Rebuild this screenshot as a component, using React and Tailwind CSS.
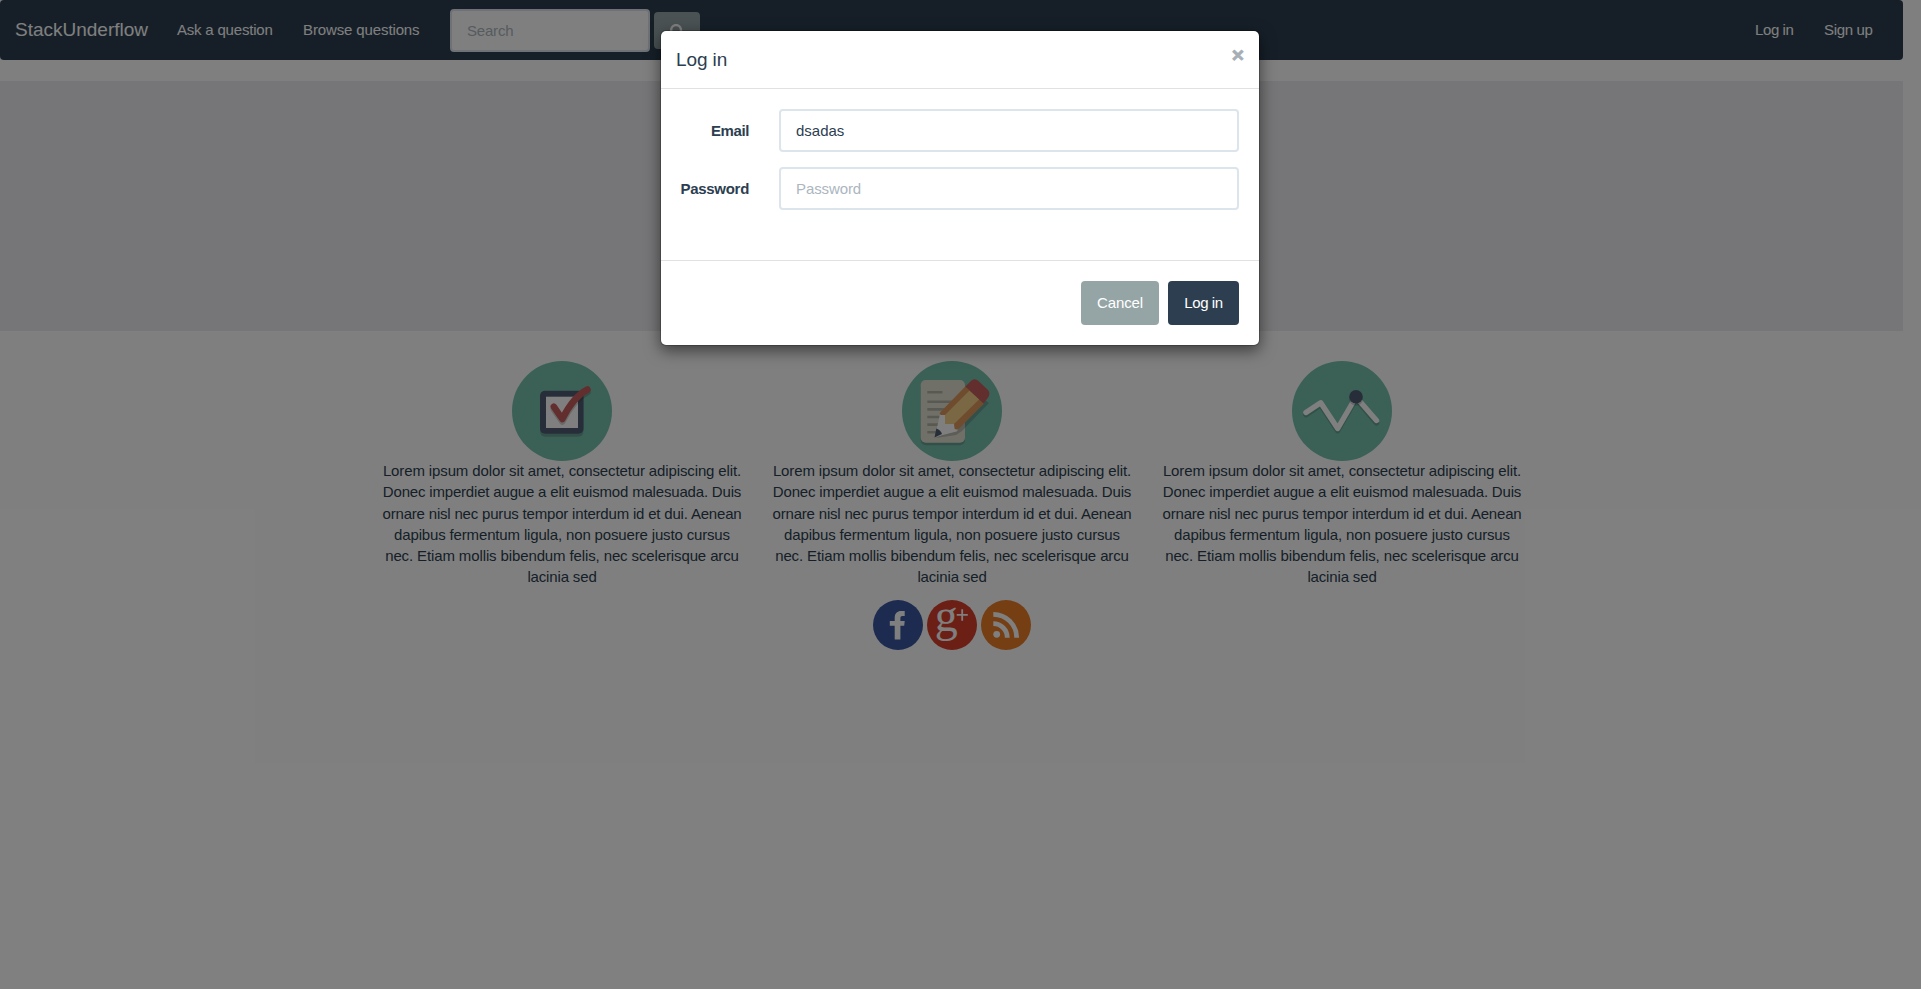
import React from "react";
import { FaSearch } from "react-icons/fa";

const LOREM = [
  ["Lorem ipsum dolor sit amet, consectetur adipiscing elit.", "tracking-[-0.125px]"],
  ["Donec imperdiet augue a elit euismod malesuada. Duis", "tracking-[-0.18px]"],
  ["ornare nisl nec purus tempor interdum id et dui. Aenean", "tracking-[-0.19px]"],
  ["dapibus fermentum ligula, non posuere justo cursus", "tracking-[-0.155px]"],
  ["nec. Etiam mollis bibendum felis, nec scelerisque arcu", "tracking-[-0.12px]"],
  ["lacinia sed", "tracking-[-0.15px]"],
];

function CheckIcon() {
  return (
    <svg viewBox="0 0 100 100" className="size-[100px]">
      <circle cx="50" cy="50" r="50" fill="#76c2af" />
      <rect x="28" y="32.7" width="43.5" height="43" rx="5" fill="#231f20" opacity=".2" />
      <rect x="28" y="29.7" width="43.5" height="43" rx="5" fill="#4f5d73" />
      <rect x="34" y="35.7" width="32" height="31.3" fill="#fff" />
      <g fill="none" strokeWidth="6.5" strokeLinecap="round" strokeLinejoin="round">
        <path d="M41.8 48.2 L50.3 60.5 C57 47 64 37 75.5 31" stroke="#231f20" opacity=".2" />
        <path d="M41.8 45.7 L50.3 58 C57 44.5 64 34.5 75.5 28.5" stroke="#c75c5c" />
      </g>
    </svg>
  );
}

function PencilIcon() {
  return (
    <svg viewBox="0 0 100 100" className="size-[100px]">
      <circle cx="50" cy="50" r="50" fill="#76c2af" />
      <rect x="18.7" y="21.5" width="44.3" height="62.7" rx="5" fill="#231f20" opacity=".2" />
      <rect x="18.7" y="19" width="44.3" height="62.7" rx="5" fill="#e0e0d1" />
      <path
        d="M25.3 31.3H40.5M25.3 40.7H50M25.3 48.4H46M25.3 56H42M25.3 63.6H40M25.3 71.3H40"
        stroke="#b3b3a7"
        strokeWidth="2.6"
      />
      <path d="M34 77 L54 74 L60 70 L87 42 L83 39 L52 67Z" fill="#231f20" opacity=".2" />
      <path d="M38 53 L33 76 L54.5 70.5 Q56 70 55.5 68 L53 55Z" fill="#fff" />
      <path
        d="M63.5 25.3 L38 51.5 Q37 53 39 54 L43 54 L43 63 L52 63 L52.5 67.5 Q54 69.5 57 67.5 L82 42.5Z"
        fill="#e0995e"
      />
      <path d="M67.5 29.5 L43 54 L43 63 L52 63 L77.5 38Z" fill="#f5cf87" />
      <path
        d="M63.3 25.5 L69.5 19.5 Q73 17 76.5 20 L86 29 Q88.5 32 86.5 36 L81.5 42.5Z"
        fill="#c75c5c"
      />
      <path d="M34.3 67.5 L32.5 76.5 L40 73 Q39 69 34.3 67.5Z" fill="#4f5d73" />
    </svg>
  );
}

function WaveIcon() {
  return (
    <svg viewBox="0 0 100 100" className="size-[100px]">
      <circle cx="50" cy="50" r="50" fill="#76c2af" />
      <g fill="none" strokeWidth="5.4" strokeLinecap="round" strokeLinejoin="round">
        <path d="M14 53.7 L28.7 44 L45.7 69.7 L64 38 L84.5 62" stroke="#231f20" opacity=".2" />
        <path d="M14 51.5 L28.7 41.8 L45.7 67.5 L64 36 L84.5 59.5" stroke="#fff" />
      </g>
      <circle cx="64" cy="38" r="6.8" fill="#231f20" opacity=".2" />
      <circle cx="64" cy="35.7" r="6.8" fill="#4f5d73" />
    </svg>
  );
}

function Feature({ icon }) {
  return (
    <div className="flex h-[229px] w-[390px] flex-col items-center px-[15px] text-center">
      {icon}
      <p className="-mt-px leading-[21.3px] whitespace-nowrap">
        {LOREM.map(([line, tracking]) => (
          <span key={line} className={`block ${tracking}`}>
            {line}{" "}
          </span>
        ))}
      </p>
    </div>
  );
}

function Field({ label, labelTracking, ...input }) {
  return (
    <div className="flex h-[43px] items-center">
      <label className={`-ml-[15px] w-[98px] shrink-0 pr-[15px] text-right font-bold ${labelTracking}`}>{label}</label>
      <input
        className="ml-[15px] h-[43px] min-w-0 grow rounded-[4px] border-2 border-[#dce4ec] bg-white px-[15px] text-[15px] text-[#2c3e50] outline-none placeholder:tracking-[-0.1px] placeholder:text-[#acb6c0]"
        {...input}
      />
    </div>
  );
}

function LoginModal() {
  return (
    <div className="mt-[30px] mr-px h-[316px] w-[600px] rounded-[6px] border border-black/20 bg-white bg-clip-padding shadow-[0_5px_15px_rgba(0,0,0,0.5)]">
      <div className="flex h-[58px] items-start justify-between border-b border-[#dfe2e5] px-[15px] pt-[15px]">
        <h4 className="text-[19px] leading-[27px] tracking-[-0.1px]">Log in</h4>
        <button className="mt-[-2px] text-[21px] leading-[22.5px] font-bold text-[#a6afb6] [-webkit-text-stroke:0.8px_#a6afb6]">
          ×
        </button>
      </div>
      <div className="flex h-[171px] flex-col gap-[15px] p-5">
        <Field label="Email" labelTracking="tracking-[-0.4px]" type="text" defaultValue="dsadas" />
        <Field label="Password" labelTracking="tracking-[-0.3px]" type="password" placeholder="Password" />
      </div>
      <div className="flex justify-end gap-[9px] border-t border-[#dfe2e5] p-5">
        <button className="h-11 w-[78px] rounded-[4px] bg-[#95a5a6] tracking-[-0.1px] text-white">Cancel</button>
        <button className="h-11 w-[71px] rounded-[4px] bg-[#2c3e50] tracking-[-0.4px] text-white">Log in</button>
      </div>
    </div>
  );
}

export default function App() {
  return (
    <div className="relative h-[989px] overflow-hidden bg-white font-['Liberation_Sans',Arial,sans-serif] text-[15px] leading-[21.43px] text-[#2c3e50]">
      <div className="mr-[18px]">
        <nav className="flex h-[60px] items-center rounded-[4px] bg-[#2c3e50] pr-[15px] whitespace-nowrap text-white">
          <a className="w-[162px] pl-[15px] text-[19px]">StackUnderflow</a>
          <a className="w-[126px] pl-[15px] tracking-[-0.2px]">Ask a question</a>
          <a className="w-[147px] pl-[15px] tracking-[-0.12px]">Browse questions</a>
          <form className="flex grow items-center gap-1 pl-[15px]">
            <input
              className="mt-px h-[43px] w-[200px] rounded-[4px] border-2 border-[#dce4ec] bg-white px-[15px] outline-none placeholder:tracking-[-0.2px] placeholder:text-[#acb6c0]"
              placeholder="Search"
            />
            <button className="mt-px flex h-[37px] w-[46px] items-center justify-center rounded-[4px] bg-[#95a5a6] pt-0.5">
              <FaSearch className="size-[15px]" />
            </button>
          </form>
          <a className="w-[69px] pl-[15px] tracking-[-0.4px]">Log in</a>
          <a className="w-[79px] pl-[15px] tracking-[-0.35px]">Sign up</a>
        </nav>
        <div className="mt-[21px] h-[250px] bg-[#ecedf1]" />
        <div className="mt-[30px] flex justify-center pl-px">
          <Feature icon={<CheckIcon />} />
          <Feature icon={<PencilIcon />} />
          <Feature icon={<WaveIcon />} />
        </div>
        <div className="mt-[10px] flex justify-center gap-1 pl-px">
          <svg viewBox="0 0 50 50" className="size-[50px]">
            <circle cx="25" cy="25" r="25" fill="#38579e" />
            <path
              d="M21.7 39.6V25.7H16.8V21H21.7V17.8C21.7 13.2 24.3 11 28.2 11H31.7V16H29.5C27.9 16 27.4 16.8 27.4 18.2V21H31.7L31.2 25.7H27.4V39.6Z"
              fill="#fff"
            />
          </svg>
          <svg viewBox="0 0 50 50" className="size-[50px] overflow-visible">
            <circle cx="25" cy="25" r="25" fill="#d83e2b" />
            <text x="7.8" y="30.8" fontSize="46" fontFamily="Liberation Serif" fill="#fff">
              g
            </text>
            <path d="M29.7 14.9H40.8M35.2 9.2V20.7" stroke="#fff" strokeWidth="1.8" />
          </svg>
          <svg viewBox="0 0 50 50" className="size-[50px]">
            <circle cx="25" cy="25" r="25" fill="#ea7c26" />
            <circle cx="15.7" cy="34.3" r="3.4" fill="#fff" />
            <path
              d="M12.3 23.7A14 14 0 0 1 26.3 37.7M12.3 14.3A23.4 23.4 0 0 1 35.7 37.7"
              fill="none"
              stroke="#fff"
              strokeWidth="4.8"
            />
          </svg>
        </div>
      </div>
      <div className="absolute inset-0 flex items-start justify-center bg-black/50">
        <LoginModal />
      </div>
    </div>
  );
}
